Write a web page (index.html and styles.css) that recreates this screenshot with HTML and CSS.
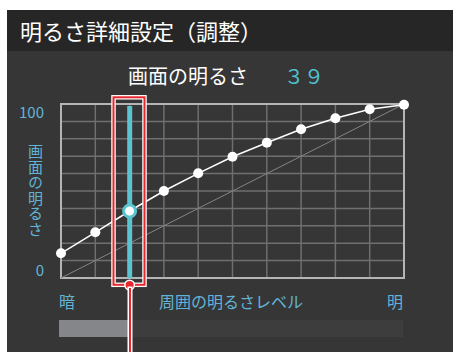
FILE: index.html
```html
<!DOCTYPE html>
<html lang="ja">
<head>
<meta charset="utf-8">
<link rel="stylesheet" href="styles.css">
</head>
<body>
<div class="panel">
  <div class="title">明るさ詳細設定（調整）</div>
  <div class="heading">画面の明るさ<span class="value">３９</span></div>
  <div class="chart-row">
    <div class="axis">
      <span class="axis-max">100</span>
      <span class="axis-name">画面の明るさ</span>
      <span class="axis-min">0</span>
    </div>
    <svg class="chart" width="360" height="200" viewBox="0 0 360 200">
      <g stroke="#6f6f6f" stroke-width="1.5">
        <line x1="7" y1="30.4" x2="350" y2="30.4"/>
        <line x1="7" y1="47.8" x2="350" y2="47.8"/>
        <line x1="7" y1="65.2" x2="350" y2="65.2"/>
        <line x1="7" y1="82.6" x2="350" y2="82.6"/>
        <line x1="7" y1="100" x2="350" y2="100"/>
        <line x1="7" y1="117.4" x2="350" y2="117.4"/>
        <line x1="7" y1="134.8" x2="350" y2="134.8"/>
        <line x1="7" y1="152.2" x2="350" y2="152.2"/>
        <line x1="7" y1="169.6" x2="350" y2="169.6"/>
        <line x1="41.3" y1="13" x2="41.3" y2="187"/>
        <line x1="75.6" y1="13" x2="75.6" y2="187"/>
        <line x1="109.9" y1="13" x2="109.9" y2="187"/>
        <line x1="144.2" y1="13" x2="144.2" y2="187"/>
        <line x1="178.5" y1="13" x2="178.5" y2="187"/>
        <line x1="212.8" y1="13" x2="212.8" y2="187"/>
        <line x1="247.1" y1="13" x2="247.1" y2="187"/>
        <line x1="281.4" y1="13" x2="281.4" y2="187"/>
        <line x1="315.7" y1="13" x2="315.7" y2="187"/>
      </g>
      <rect x="7" y="13" width="343" height="174" fill="none" stroke="#b5b5b5" stroke-width="2"/>
      <line x1="7" y1="187" x2="350" y2="13" stroke="#858585" stroke-width="1"/>
      <polyline fill="none" stroke="#ffffff" stroke-width="1.5"
        points="7,162.3 41.3,141.3 75.6,120 109.9,100 144.2,82.3 178.5,65.7 212.8,51.7 247.1,38.3 281.4,27.3 315.7,18.3 350,13.7"/>
      <rect x="73.2" y="15" width="5" height="172" fill="#5ac4d0"/>
      <g fill="#ffffff">
        <circle cx="7" cy="162.3" r="5"/>
        <circle cx="41.3" cy="141.3" r="5"/>
        <circle cx="109.9" cy="100" r="5"/>
        <circle cx="144.2" cy="82.3" r="5"/>
        <circle cx="178.5" cy="65.7" r="5"/>
        <circle cx="212.8" cy="51.7" r="5"/>
        <circle cx="247.1" cy="38.3" r="5"/>
        <circle cx="281.4" cy="27.3" r="5"/>
        <circle cx="315.7" cy="18.3" r="5"/>
        <circle cx="350" cy="13.7" r="5"/>
      </g>
      <circle cx="75.6" cy="120" r="6" fill="#ffffff" stroke="#5ac4d0" stroke-width="3"/>
      <rect x="59.5" y="6.3" width="31" height="187.5" fill="none" stroke="#ffffff" stroke-width="4.5"/>
      <rect x="59.5" y="6.3" width="31" height="187.5" fill="none" stroke="#e8262d" stroke-width="2"/>
      <circle cx="75.6" cy="194" r="5.5" fill="#ffffff"/>
      <circle cx="75.6" cy="194" r="4" fill="#e8262d"/>
    </svg>
  </div>
  <div class="xlabels">
    <span>暗</span>
    <span>周囲の明るさレベル</span>
    <span>明</span>
  </div>
  <div class="bar"><div class="bar-fill" style="width:69px"></div></div>
  <div class="cursor-line"></div>
</div>
</body>
</html>
```

FILE: styles.css
```css
html, body {
  margin: 0;
  padding: 0;
  background: #ffffff;
  overflow: hidden;
}
body {
  font-family: "Noto Sans CJK JP", "Noto Sans", sans-serif;
}
.panel {
  position: relative;
  margin: 10px 0 0 7px;
  height: 342px;
  background: #363636;
  overflow: hidden;
  display: flex;
  flex-direction: column;
}
.title {
  height: 41px;
  line-height: 41px;
  background: #262626;
  color: #ffffff;
  font-size: 22px;
  padding-left: 13px;
  white-space: nowrap;
}
.heading {
  padding: 13px 0 3px 121px;
  height: 24px;
  line-height: 24px;
  font-size: 20px;
  color: #ffffff;
  white-space: nowrap;
}
.value {
  margin-left: 36px;
  color: #4fc1cf;
}
.chart-row {
  display: flex;
  height: 200px;
}
.axis {
  width: 37px;
  padding-right: 10px;
  display: flex;
  flex-direction: column;
  align-items: flex-end;
  color: #62b4d6;
}
.axis-max {
  margin-top: 12px;
  font-size: 15px;
  line-height: 17px;
}
.axis-name {
  margin-top: 24px;
  margin-right: 1px;
  writing-mode: vertical-rl;
  font-size: 15px;
  line-height: 16px;
  letter-spacing: 0.5px;
}
.axis-min {
  margin-top: 24px;
  font-size: 15px;
  line-height: 17px;
}
.chart {
  display: block;
}
.xlabels {
  display: flex;
  justify-content: space-between;
  width: 344px;
  margin-left: 52px;
  height: 20px;
  line-height: 20px;
  font-size: 16px;
  color: #62b4d6;
}
.bar {
  margin: 9px 0 0 52px;
  width: 344px;
  height: 17px;
  background: #3d3d3d;
}
.bar-fill {
  height: 100%;
  background: #858689;
}
.cursor-line {
  position: absolute;
  left: 121.6px;
  top: 278px;
  width: 2px;
  height: 70px;
  background: #e8262d;
  box-shadow: 0 0 0 1.5px #ffffff;
}
```
